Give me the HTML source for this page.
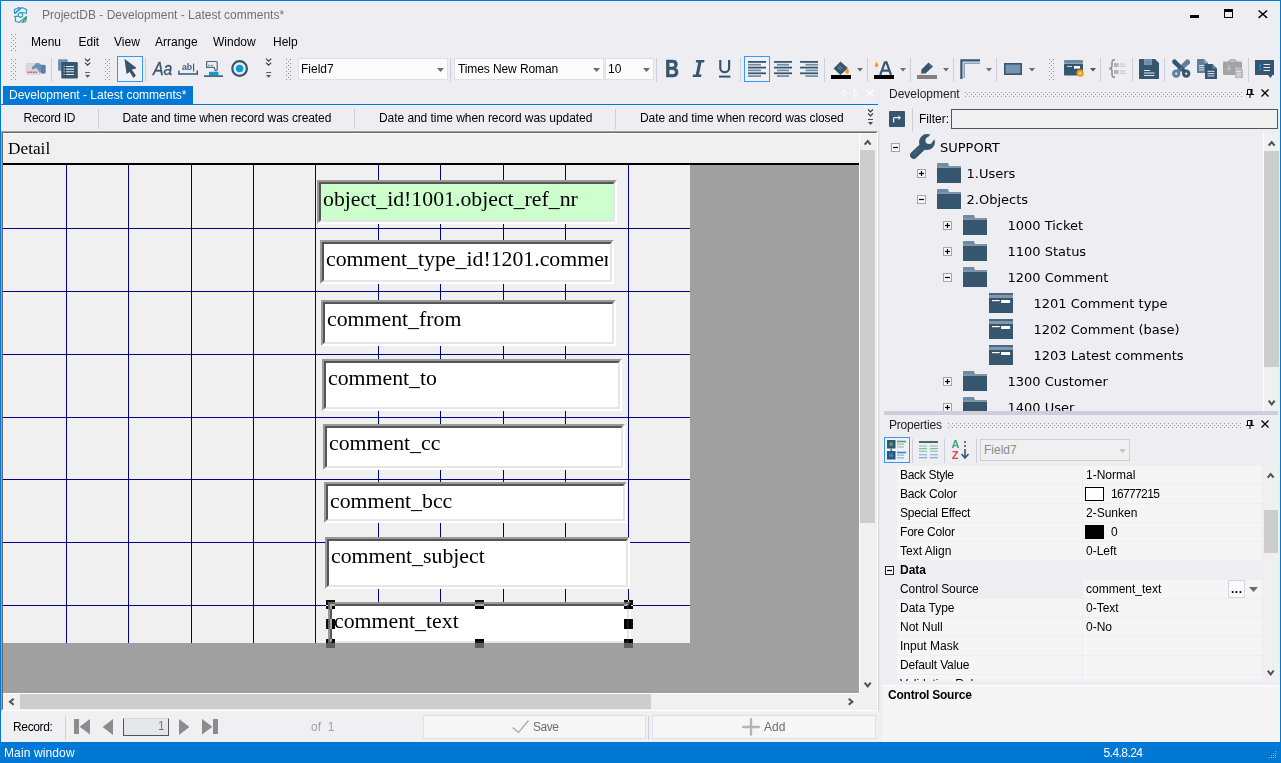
<!DOCTYPE html>
<html><head><meta charset="utf-8"><title>ProjectDB</title>
<style>
*{box-sizing:border-box;margin:0;padding:0}
html,body{width:1281px;height:763px;overflow:hidden}
body{background:#eeeef2;font-family:"Liberation Sans",sans-serif;font-size:12px;color:#1e1e1e;position:relative}
.a{position:absolute}
.t{position:absolute;white-space:nowrap;line-height:16px;height:16px}
.grip{position:absolute;width:6px;background-image:radial-gradient(circle at 1px 1px,#999aa3 0.7px,transparent 1px),radial-gradient(circle at 3px 3px,#999aa3 0.7px,transparent 1px);background-size:4px 4px}
.hgrip{position:absolute;height:5px;background-image:radial-gradient(circle at 1px 1px,#a3a4ae 0.7px,transparent 1px),radial-gradient(circle at 3px 3px,#a3a4ae 0.7px,transparent 1px);background-size:4px 4px}
.sep{position:absolute;width:1px;background:#cccedb}
svg{position:absolute;overflow:visible}
.fld{position:absolute;background:#fff;border-top:2px solid #9a9a9a;border-left:2px solid #9a9a9a;border-right:2px solid #fff;border-bottom:2px solid #fff}
.fld i{position:absolute;left:0;top:0;right:0;bottom:0;border-top:2px solid #555;border-left:2px solid #555;border-right:2px solid #e6e6e6;border-bottom:2px solid #e6e6e6}
.fld b{position:absolute;font-weight:normal;font-family:"Liberation Serif",serif;font-size:21.8px;line-height:24px;white-space:nowrap;color:#000;left:4px;top:5px;right:4px;overflow:hidden}
.hd{position:absolute;width:7px;height:6px;background:#000}
.tree{font-family:"DejaVu Sans","Liberation Sans",sans-serif;font-size:13px;color:#000}
.pr{position:absolute;left:896px;width:364px;height:19px;background:#f5f5f5}
.pr .t{top:1px}
</style></head><body>
<svg width="0" height="0" style="left:0;top:0"><defs><pattern id="gp" width="4" height="4" patternUnits="userSpaceOnUse"><rect x="0" y="0" width="1" height="1" fill="#8e8e92"/><rect x="2" y="2" width="1" height="1" fill="#8e8e92"/></pattern><pattern id="gp2" width="4" height="4" patternUnits="userSpaceOnUse"><rect x="0" y="0" width="1" height="1" fill="#9a9a9e"/><rect x="2" y="2" width="1" height="1" fill="#9a9a9e"/></pattern></defs></svg>
<div class="a" style="left:0px;top:0px;width:1281px;height:1px;background:#0078d7"></div>
<div class="a" style="left:0px;top:0px;width:1px;height:763px;background:#0078d7"></div>
<div class="a" style="left:1280px;top:0px;width:1px;height:763px;background:#0078d7"></div>
<svg style="left:14px;top:7px" width="13" height="16" viewBox="0 0 13 16"><g fill="none" stroke-width="1.15" stroke-linejoin="round" stroke-linecap="round">
<path d="M0.5 2.6 L5 0.5 L6.2 1 L0.9 6.3 L0.5 6.1 Z" stroke="#2196d8"/>
<path d="M1.4 6.4 L8 0.5 L12.5 2.6 L12.5 6.2 L6.8 5.3" stroke="#2a9cc4"/>
<path d="M4.4 6.7 L6.4 5.4 L8.6 7 L8.6 9.3 L6.6 10.5 L4.4 9.1 Z" stroke="#2aa0b5"/>
<path d="M0.5 9.6 L4.4 9.1 M1.3 9.9 L1.5 14.3 L5.2 15.5 L12.4 9.5" stroke="#2ba2a6"/>
<path d="M12.5 9.8 L11.7 14.5 L8.2 15.5 L11.5 11.4" stroke="#35a06a"/>
</g></svg>
<div class="t " style="left:42px;top:7px;color:#717171">ProjectDB - Development - Latest comments*</div>
<div class="a" style="left:1190px;top:15px;width:9px;height:3px;background:#000"></div>
<div class="a" style="left:1224px;top:9px;width:9px;height:9px;border:1px solid #000;border-top-width:3px"></div>
<svg style="left:1258.3px;top:9.8px" width="9.7" height="8.4" viewBox="0 0 9.7 8.4"><path d="M0.6 0.5 L9.1 7.9 M9.1 0.5 L0.6 7.9" stroke="#000" stroke-width="1.4" fill="none"/></svg>
<svg style="left:11px;top:34px" width="5" height="17"><rect width="5" height="17" fill="url(#gp)"/></svg>
<div class="t " style="left:31px;top:34px;color:#000">Menu</div>
<div class="t " style="left:78.5px;top:34px;color:#000">Edit</div>
<div class="t " style="left:114px;top:34px;color:#000">View</div>
<div class="t " style="left:155px;top:34px;color:#000">Arrange</div>
<div class="t " style="left:213px;top:34px;color:#000">Window</div>
<div class="t " style="left:273px;top:34px;color:#000">Help</div>
<svg style="left:11px;top:59px" width="5" height="21"><rect width="5" height="21" fill="url(#gp)"/></svg>
<svg style="left:26px;top:62px" width="20" height="14" viewBox="0 0 20 14"><rect x="0.3" y="1.5" width="14.6" height="10.8" rx="0.8" fill="#d6dade" stroke="#c6cad1" stroke-width="0.6"/><path d="M7.4 5.9 L11.4 2.4" stroke="#6f93b6" stroke-width="3" stroke-linecap="round"/><path d="M9.6 1.6 L12.4 1 L16 3.2 V10.6 H13.2 C12.4 8.2 11.2 6.6 9 5.6 Z" fill="#6f93b6"/><rect x="15" y="2.7" width="4.7" height="9" rx="1.6" fill="#5b80a3"/><path d="M1.8 10.2 H11" stroke="#e8474c" stroke-width="1.5" stroke-dasharray="1.6 0.9"/></svg>
<div class="sep" style="left:51px;top:58px;height:24px"></div>
<svg style="left:58px;top:59px" width="20" height="20" viewBox="0 0 20 20"><rect x="0" y="0.2" width="9.6" height="11.6" rx="1" fill="#6d90b3"/><rect x="3.3" y="3" width="16.5" height="16.6" rx="1.2" fill="#36566f"/><path d="M8 7.5 H16 M8 10.1 H16 M8 12.7 H16 M8 15.5 H16" stroke="#e3e9ef" stroke-width="1.1"/><path d="M5.6 7.5 H6.8 M5.6 10.1 H6.8 M5.6 12.7 H6.8 M5.6 15.5 H6.8" stroke="#c5d2de" stroke-width="1.1"/></svg>
<svg style="left:84px;top:58px" width="7" height="21" viewBox="0 0 7 21"><path d="M1 0.6 L3.6 3.2 L6.2 0.6 M1 4.6 L3.6 7.2 L6.2 4.6" stroke="#3b3b3b" stroke-width="1.05" fill="none"/><path d="M1 14.6 H6.2" stroke="#5a5a5a" stroke-width="1"/><path d="M1 17 H6.2 L3.6 19.8 Z" fill="#5a5a5a"/></svg>
<svg style="left:105px;top:59px" width="5" height="21"><rect width="5" height="21" fill="url(#gp)"/></svg>
<div class="a" style="left:117px;top:56px;width:26px;height:26px;border:1px solid #3399ff;background:#f1f1f5"></div>
<svg style="left:123px;top:59px" width="14" height="20" viewBox="0 0 14 20"><path d="M1.4 -0.2 L13 8.4 L12.6 9.8 L8.8 10.4 L12.9 16.5 L10.4 19 L6.8 13 L3.6 15 Z" fill="#36566f"/></svg>
<div class="sep" style="left:145px;top:58px;height:24px"></div>
<div class="t " style="left:152.6px;top:57.8px;font-style:italic;font-size:17.6px;line-height:22px;height:22px;color:#36566f;transform:scaleX(0.9);transform-origin:0 0;-webkit-text-stroke:0.3px #36566f">Aa</div>
<svg style="left:178px;top:60px" width="20" height="18" viewBox="0 0 20 18"><text x="4" y="10.3" font-family="Liberation Sans,sans-serif" font-size="9" font-weight="700" fill="#3f5f78" textLength="10.2" lengthAdjust="spacingAndGlyphs">ab</text><path d="M15.6 3.4 V11.5" stroke="#36566f" stroke-width="1.1"/><path d="M0.9 10.6 V14 H19.3 V10.6" stroke="#36566f" stroke-width="1.4" fill="none"/></svg>
<svg style="left:204px;top:60px" width="20" height="18" viewBox="0 0 20 18"><path d="M2.6 1.5 H12.2 Q13.2 1.5 13.2 2.5 V9.8 Q12.2 11.4 11 10 L10 7.4 H2.6 Z" fill="none" stroke="#4a6983" stroke-width="1.2" stroke-linejoin="round"/><path d="M4 5.4 H9.6" stroke="#6d8ba5" stroke-width="1.2" stroke-dasharray="1 0.5"/><rect x="5" y="11.8" width="9.5" height="3.6" fill="#0e9ad7"/><path d="M0 16.1 H19" stroke="#36566f" stroke-width="1.6"/></svg>
<svg style="left:231px;top:60px" width="17" height="17" viewBox="0 0 17 17"><circle cx="8.6" cy="8.5" r="7.3" fill="none" stroke="#36566f" stroke-width="2.2"/><circle cx="8.6" cy="8.5" r="3.8" fill="#0e9ad7"/></svg>
<svg style="left:265px;top:58px" width="7" height="21" viewBox="0 0 7 21"><path d="M1 0.6 L3.6 3.2 L6.2 0.6 M1 4.6 L3.6 7.2 L6.2 4.6" stroke="#3b3b3b" stroke-width="1.05" fill="none"/><path d="M1 14.6 H6.2" stroke="#5a5a5a" stroke-width="1"/><path d="M1 17 H6.2 L3.6 19.8 Z" fill="#5a5a5a"/></svg>
<svg style="left:286px;top:59px" width="5" height="21"><rect width="5" height="21" fill="url(#gp)"/></svg>
<div class="a" style="left:298px;top:58px;width:150px;height:22px;border:1px solid #dddfe9;background:#fcfcfc"></div>
<div class="t " style="left:301px;top:61px;color:#000">Field7</div>
<svg style="left:437px;top:68px" width="7" height="4" viewBox="0 0 7 4"><path d="M0 0 H7 L3.5 4 Z" fill="#6d6d6d"/></svg>
<div class="sep" style="left:450px;top:58px;height:24px"></div>
<div class="a" style="left:454px;top:58px;width:150px;height:22px;border:1px solid #dddfe9;background:#fcfcfc"></div>
<div class="t " style="left:458px;top:61px;color:#000;letter-spacing:-0.1px">Times New Roman</div>
<svg style="left:593px;top:68px" width="7" height="4" viewBox="0 0 7 4"><path d="M0 0 H7 L3.5 4 Z" fill="#6d6d6d"/></svg>
<div class="a" style="left:605px;top:58px;width:49px;height:22px;border:1px solid #dddfe9;background:#fcfcfc"></div>
<div class="t " style="left:608px;top:61px;color:#000">10</div>
<svg style="left:643px;top:68px" width="7" height="4" viewBox="0 0 7 4"><path d="M0 0 H7 L3.5 4 Z" fill="#6d6d6d"/></svg>
<div class="sep" style="left:656px;top:58px;height:24px"></div>
<div class="t " style="left:665px;top:56px;font-weight:700;font-size:23px;line-height:26px;height:26px;color:#36566f;transform:scaleX(0.84);transform-origin:0 0;-webkit-text-stroke:0.7px #36566f">B</div>
<svg style="left:692px;top:60px" width="13" height="17" viewBox="0 0 13 17"><path d="M4.2 0 H12.6 L12.1 2.6 H9.4 L7 14.4 H9.6 L9.1 17 H0.6 L1.1 14.4 H3.8 L6.2 2.6 H3.7 Z" fill="#36566f"/></svg>
<svg style="left:719px;top:60px" width="12" height="18" viewBox="0 0 12 18"><path d="M1.3 0 V8.2 C1.3 13.4 10.1 13.4 10.1 8.2 V0" stroke="#36566f" stroke-width="2.2" fill="none"/><path d="M0 16.6 H11.4" stroke="#36566f" stroke-width="2"/></svg>
<div class="sep" style="left:740px;top:58px;height:24px"></div>
<div class="a" style="left:744px;top:56px;width:26px;height:26px;border:1px solid #3399ff;background:#f1f1f5"></div>
<svg style="left:748px;top:60px" width="18" height="18" viewBox="0 0 18 18"><rect x="0" y="1.00" width="18" height="1.8" fill="#36566f"/><rect x="0" y="3.85" width="13" height="1.7" fill="#6d8ba5"/><rect x="0" y="6.70" width="18" height="1.8" fill="#36566f"/><rect x="0" y="9.55" width="13" height="1.7" fill="#6d8ba5"/><rect x="0" y="12.40" width="18" height="1.8" fill="#36566f"/><rect x="0" y="15.25" width="13" height="1.7" fill="#6d8ba5"/></svg>
<svg style="left:774px;top:60px" width="18" height="18" viewBox="0 0 18 18"><rect x="0" y="1.00" width="18" height="1.8" fill="#36566f"/><rect x="3" y="3.85" width="12" height="1.7" fill="#6d8ba5"/><rect x="0" y="6.70" width="18" height="1.8" fill="#36566f"/><rect x="3" y="9.55" width="12" height="1.7" fill="#6d8ba5"/><rect x="0" y="12.40" width="18" height="1.8" fill="#36566f"/><rect x="3" y="15.25" width="12" height="1.7" fill="#6d8ba5"/></svg>
<svg style="left:800px;top:60px" width="18" height="18" viewBox="0 0 18 18"><rect x="0" y="1.00" width="18" height="1.8" fill="#36566f"/><rect x="5.5" y="3.85" width="12.5" height="1.7" fill="#6d8ba5"/><rect x="0" y="6.70" width="18" height="1.8" fill="#36566f"/><rect x="5.5" y="9.55" width="12.5" height="1.7" fill="#6d8ba5"/><rect x="0" y="12.40" width="18" height="1.8" fill="#36566f"/><rect x="5.5" y="15.25" width="12.5" height="1.7" fill="#6d8ba5"/></svg>
<div class="sep" style="left:824px;top:58px;height:24px"></div>
<svg style="left:831px;top:61px" width="20" height="18" viewBox="0 0 20 18"><path d="M9.5 0.6 L17 7.2 L9.4 14 L2.6 7.6 Z" fill="#36566f"/><path d="M8.2 4.6 l3.4 3 M6.8 6 l3.4 3" stroke="#8aa4bd" stroke-width="0.8"/><path d="M16.2 6.6 C14.4 9.4 13.8 10.8 14.6 12 C15.5 13.2 17.4 13 17.9 11.6 C18.3 10.3 17.6 8.8 16.2 6.6 Z" fill="#f39a1e"/><rect x="0" y="14" width="20" height="4" fill="#000"/></svg>
<svg style="left:857px;top:68px" width="6" height="3.4" viewBox="0 0 6 3.4"><path d="M0 0 H6 L3.0 3.4 Z" fill="#6d6d6d"/></svg>
<div class="sep" style="left:867px;top:58px;height:24px"></div>
<svg style="left:874px;top:61px" width="20" height="18" viewBox="0 0 20 18"><path d="M2.6 0.8 C1 3.2 0.6 4.4 1.3 5.5 C2.1 6.5 3.8 6.3 4.2 5 C4.5 3.9 3.9 2.8 2.6 0.8 Z" fill="#f39a1e"/><path d="M6.2 13.8 L10.9 1.4 H12.5 L17 13.8 M8 9.6 H15.2" stroke="#36566f" stroke-width="2.2" fill="none"/><rect x="0" y="14" width="20" height="4" fill="#000"/></svg>
<svg style="left:900px;top:68px" width="6" height="3.4" viewBox="0 0 6 3.4"><path d="M0 0 H6 L3.0 3.4 Z" fill="#6d6d6d"/></svg>
<div class="sep" style="left:910px;top:58px;height:24px"></div>
<svg style="left:917px;top:62px" width="20" height="17" viewBox="0 0 20 17"><path d="M11.5 0.5 L16 4.5 L8.5 11.5 L4 11.5 L4.5 7.5 Z" fill="#36566f"/><path d="M3.2 12.4 L4.5 10.6 L5.6 11.8 Z" fill="#f39a1e"/><path d="M12 2.6 l2 1.8" stroke="#7f9ab5" stroke-width="0.7"/><rect x="0" y="13" width="20" height="4" fill="#808080"/></svg>
<svg style="left:943px;top:68px" width="6" height="3.4" viewBox="0 0 6 3.4"><path d="M0 0 H6 L3.0 3.4 Z" fill="#6d6d6d"/></svg>
<div class="sep" style="left:953px;top:58px;height:24px"></div>
<svg style="left:960px;top:59px" width="20" height="20" viewBox="0 0 20 20"><path d="M1.4 20 V1.4 H20" stroke="#36566f" stroke-width="2.2" fill="none"/><path d="M4.2 19 V4.2 H20" stroke="#8ea4bb" stroke-width="1.6" fill="none"/></svg>
<svg style="left:986px;top:68px" width="6" height="3.4" viewBox="0 0 6 3.4"><path d="M0 0 H6 L3.0 3.4 Z" fill="#6d6d6d"/></svg>
<div class="sep" style="left:996px;top:58px;height:24px"></div>
<svg style="left:1004px;top:63px" width="18" height="12" viewBox="0 0 18 12"><rect x="0.8" y="0.8" width="16.4" height="10.4" fill="#7795b1" stroke="#36566f" stroke-width="1.6"/></svg>
<svg style="left:1029px;top:68px" width="6" height="3.4" viewBox="0 0 6 3.4"><path d="M0 0 H6 L3.0 3.4 Z" fill="#6d6d6d"/></svg>
<svg style="left:1049px;top:59px" width="5" height="21"><rect width="5" height="21" fill="url(#gp)"/></svg>
<svg style="left:1064px;top:60px" width="20" height="17" viewBox="0 0 20 17"><rect x="0" y="0" width="19" height="3" rx="0.6" fill="#6d8ba5"/><rect x="0" y="3.4" width="19" height="12.2" rx="0.8" fill="#36566f"/><path d="M3 6.5 H8" stroke="#c8d4df" stroke-width="1"/><rect x="10" y="6" width="6" height="2.6" fill="#fff"/><circle cx="16.2" cy="13.2" r="3.6" fill="#f39a1e"/><path d="M14.6 14.4 l3 -2.4 M15 12.4 l2.6 1.6" stroke="#fbe3bd" stroke-width="0.9"/></svg>
<svg style="left:1090px;top:68px" width="6" height="3.4" viewBox="0 0 6 3.4"><path d="M0 0 H6 L3.0 3.4 Z" fill="#4d4d4d"/></svg>
<div class="sep" style="left:1100px;top:58px;height:24px"></div>
<svg style="left:1108px;top:59px" width="18" height="19" viewBox="0 0 18 19"><path d="M7 0.8 C4.2 0.8 4 1.6 4 4 V7 C4 8.8 3 9.4 1.2 9.5 C3 9.6 4 10.2 4 12 V15 C4 17.4 4.2 18.2 7 18.2" stroke="#8b8b8b" stroke-width="1.5" fill="none"/><rect x="6" y="4" width="4.5" height="4" fill="#b4b4b4"/><rect x="6" y="11" width="4.5" height="4" fill="#b4b4b4"/><path d="M12 5 H17 M12 7.3 H18 M12 12 H17 M12 14.3 H18" stroke="#c4c4c4" stroke-width="1"/></svg>
<div class="sep" style="left:1132px;top:58px;height:24px"></div>
<svg style="left:1139px;top:59px" width="20" height="20" viewBox="0 0 20 20"><path d="M1 0 H16 L20 4 V19 C20 19.6 19.6 20 19 20 H1 C0.4 20 0 19.6 0 19 V1 C0 0.4 0.4 0 1 0 Z" fill="#36566f"/><rect x="5" y="0" width="8" height="6" fill="#7795b1"/><path d="M7.5 3.2 H9.5" stroke="#36566f" stroke-width="0.8"/><path d="M5 11.5 H11 M5 14 H15.5 M5 16.5 H15.5" stroke="#e3e9ef" stroke-width="1.2"/></svg>
<div class="sep" style="left:1164px;top:58px;height:24px"></div>
<svg style="left:1172px;top:59px" width="19" height="19" viewBox="0 0 19 19"><path d="M14.6 0.2 C17.2 0.2 18.6 2.2 17.8 4.6 L7.6 13.6 L4.6 10.4 Z" fill="#5f7f9c"/><circle cx="4.2" cy="14.6" r="2.7" fill="none" stroke="#5f7f9c" stroke-width="3"/><path d="M2 0.2 C0 0.8 -0.4 3 0.8 4.6 L11.2 14 L14.4 11.4 L3.6 0.4 Z" fill="#36566f"/><circle cx="14.2" cy="14.6" r="2.7" fill="none" stroke="#36566f" stroke-width="3"/><circle cx="9.1" cy="9.6" r="1" fill="#5f7f9c"/></svg>
<svg style="left:1197px;top:59px" width="20" height="20" viewBox="0 0 20 20"><path d="M0 0 H7 L11 4 V14 H0 Z" fill="#5f7f9c"/><path d="M7 0 V4 H11 Z" fill="#8da7c0"/><path d="M2 6.5 H7 M2 8.7 H7 M2 10.9 H7" stroke="#dfe6ee" stroke-width="1"/><path d="M8 5 H15.5 L20 9.5 V20 H8 Z" fill="#36566f"/><path d="M15.5 5 V9.5 H20 Z" fill="#6d8ba5"/><path d="M10.5 12.3 H17.5 M10.5 14.6 H17.5 M10.5 16.9 H17.5" stroke="#dfe6ee" stroke-width="1"/></svg>
<svg style="left:1223px;top:59px" width="20" height="20" viewBox="0 0 20 20"><path d="M6 3 C6 0 13 0 13 3" stroke="#a8a8a8" stroke-width="1.4" fill="none"/><rect x="0" y="2.5" width="19" height="13.5" rx="1" fill="#a3a3a3"/><path d="M6 6 V11 M4 9 L6 11.5 L8 9" stroke="#c9c9c9" stroke-width="1" fill="none"/><path d="M12 8 H17 L20 11 V19 H12 Z" fill="#b9b9b9"/><path d="M13.5 12.5 H18 M13.5 14.7 H18 M13.5 16.9 H18" stroke="#e6e6e6" stroke-width="1"/></svg>
<div class="sep" style="left:1248px;top:58px;height:24px"></div>
<svg style="left:1255px;top:60px" width="20" height="19" viewBox="0 0 20 19"><path d="M0 0 H19 V15 H17.5 L15.5 18 L13 15 H0 Z" fill="#36566f"/><path d="M8.5 4.5 H15 M8.5 7.5 H15 M8.5 10.5 H15" stroke="#e3e9ef" stroke-width="1.2"/><path d="M5.2 4.5 V10.5 M4 6 L5.2 4.5" stroke="#0e9ad7" stroke-width="1" fill="none"/></svg>
<div class="a" style="left:3px;top:86px;width:190px;height:19px;background:#0078d4"></div>
<div class="a" style="left:1px;top:104px;width:877px;height:1px;background:#0078d4"></div>
<div class="t " style="left:9px;top:87px;color:#fff">Development - Latest comments*</div>
<svg style="left:840px;top:89px" width="35" height="9" viewBox="0 0 35 9"><path d="M5 0.5 V8 L0.8 4.2 Z M14.5 0.5 V8 L18.7 4.2 Z" fill="none" stroke="#fff" stroke-width="1"/><path d="M26.5 0.7 L33.5 7.7 M33.5 0.7 L26.5 7.7" stroke="#fff" stroke-width="1.3"/></svg>
<div class="t " style="left:23.5px;top:110px;color:#000;letter-spacing:-0.27px">Record ID</div>
<div class="t " style="left:122.5px;top:110px;color:#000;letter-spacing:-0.09px">Date and time when record was created</div>
<div class="t " style="left:379px;top:110px;color:#000;letter-spacing:-0.06px">Date and time when record was updated</div>
<div class="t " style="left:640px;top:110px;color:#000;letter-spacing:-0.085px">Date and time when record was closed</div>
<div class="sep" style="left:98px;top:109px;height:20px"></div>
<div class="sep" style="left:354px;top:109px;height:20px"></div>
<div class="sep" style="left:615px;top:109px;height:20px"></div>
<svg style="left:867px;top:109px" width="7" height="17" viewBox="0 0 7 17"><path d="M1.1 0.5 L3.5 3 L5.9 0.5 M1.1 4.5 L3.5 7 L5.9 4.5" stroke="#3b3b3b" stroke-width="1.2" fill="none"/><path d="M1 10.5 H6" stroke="#4a4a4a" stroke-width="1"/><path d="M1 13 H6 L3.5 16 Z" fill="#4a4a4a"/></svg>
<div class="a" style="left:878px;top:131px;width:1px;height:611px;background:#d7d9e5"></div>
<div class="a" style="left:879px;top:131px;width:1px;height:611px;background:#e5e6ee"></div>
<div class="a" style="left:878px;top:86px;width:2px;height:45px;background:#eaeaf0"></div>
<div class="a" style="left:1px;top:131px;width:877px;height:580px;border-top:1px solid #a0a0a0;border-left:1px solid #a0a0a0;border-right:1px solid #fff;border-bottom:1px solid #fff;background:#a0a0a0"></div>
<div class="a" style="left:2px;top:132px;width:875px;height:578px;border-top:1px solid #696969;border-left:1px solid #696969;border-right:1px solid #e3e3e3;border-bottom:1px solid #e3e3e3"></div>
<div class="a" style="left:3px;top:133px;width:856px;height:560px;overflow:hidden;background:#a0a0a0">
<div class="a" style="left:0px;top:0px;width:856px;height:30px;background:#f0f0f0"></div>
<div class="t" style="left:5px;top:6px;font-family:'Liberation Serif',serif;font-size:17.3px;line-height:20px;height:20px;color:#000">Detail</div>
<div class="a" style="left:0px;top:30px;width:856px;height:2px;background:#000"></div>
<div class="a" style="left:0px;top:32px;width:687px;height:478px;overflow:hidden;background:#f0f0f0">
<div class="a" style="left:63px;top:0;width:1px;height:478px;background:#000080"></div>
<div class="a" style="left:125px;top:0;width:1px;height:478px;background:#000080"></div>
<div class="a" style="left:188px;top:0;width:1px;height:478px;background:#000080"></div>
<div class="a" style="left:250px;top:0;width:1px;height:478px;background:#000080"></div>
<div class="a" style="left:312px;top:0;width:1px;height:478px;background:#000080"></div>
<div class="a" style="left:375px;top:0;width:1px;height:478px;background:#000080"></div>
<div class="a" style="left:437px;top:0;width:1px;height:478px;background:#000080"></div>
<div class="a" style="left:500px;top:0;width:1px;height:478px;background:#000080"></div>
<div class="a" style="left:562px;top:0;width:1px;height:478px;background:#000080"></div>
<div class="a" style="left:625px;top:0;width:1px;height:478px;background:#000080"></div>
<div class="a" style="left:0;top:63px;width:687px;height:1px;background:#000080"></div>
<div class="a" style="left:0;top:126px;width:687px;height:1px;background:#000080"></div>
<div class="a" style="left:0;top:189px;width:687px;height:1px;background:#000080"></div>
<div class="a" style="left:0;top:252px;width:687px;height:1px;background:#000080"></div>
<div class="a" style="left:0;top:314px;width:687px;height:1px;background:#000080"></div>
<div class="a" style="left:0;top:377px;width:687px;height:1px;background:#000080"></div>
<div class="a" style="left:0;top:440px;width:687px;height:1px;background:#000080"></div>
<div class="fld" style="left:314px;top:15px;width:300px;height:44px;background:#ccffcc"><i></i><b>object_id!1001.object_ref_nr</b></div>
<div class="fld" style="left:317px;top:75px;width:294px;height:44px;background:#fff"><i></i><b>comment_type_id!1201.comment_type_name</b></div>
<div class="fld" style="left:318px;top:135px;width:295px;height:46px;background:#fff"><i></i><b>comment_from</b></div>
<div class="fld" style="left:319px;top:194px;width:300px;height:52px;background:#fff"><i></i><b>comment_to</b></div>
<div class="fld" style="left:320px;top:259px;width:302px;height:46px;background:#fff"><i></i><b>comment_cc</b></div>
<div class="fld" style="left:321px;top:317px;width:303px;height:41px;background:#fff"><i></i><b>comment_bcc</b></div>
<div class="fld" style="left:322px;top:372px;width:305px;height:52px;background:#fff"><i></i><b>comment_subject</b></div>
<div class="fld" style="left:325px;top:437px;width:303px;height:43px;background:#fff"><i></i><b>comment_text</b></div>
</div>
</div>
<div class="a" style="left:326px;top:600px;width:9px;height:9px;background:#fff;mix-blend-mode:difference"></div>
<div class="a" style="left:326px;top:619px;width:9px;height:10px;background:#fff;mix-blend-mode:difference"></div>
<div class="a" style="left:326px;top:639px;width:9px;height:9px;background:#fff;mix-blend-mode:difference"></div>
<div class="a" style="left:475px;top:600px;width:9px;height:9px;background:#fff;mix-blend-mode:difference"></div>
<div class="a" style="left:475px;top:639px;width:9px;height:9px;background:#fff;mix-blend-mode:difference"></div>
<div class="a" style="left:624px;top:600px;width:9px;height:9px;background:#fff;mix-blend-mode:difference"></div>
<div class="a" style="left:624px;top:619px;width:9px;height:10px;background:#fff;mix-blend-mode:difference"></div>
<div class="a" style="left:624px;top:639px;width:9px;height:9px;background:#fff;mix-blend-mode:difference"></div>
<div class="a" style="left:859px;top:133px;width:18px;height:560px;background:#f0f0f0"></div>
<svg style="left:864px;top:138.7px" width="7.4" height="6.4" viewBox="0 0 7.4 6.4"><path d="M0.7 5.7 L3.7 2 L6.7 5.7" stroke="#505050" stroke-width="2" fill="none"/></svg>
<svg style="left:864px;top:682px" width="7.4" height="6.4" viewBox="0 0 7.4 6.4"><path d="M0.7 0.7 L3.7 4.4 L6.7 0.7" stroke="#505050" stroke-width="2" fill="none"/></svg>
<div class="a" style="left:860px;top:150px;width:15px;height:373px;background:#cdcdcd"></div>
<div class="a" style="left:859px;top:133px;width:1px;height:560px;background:#fff"></div>
<div class="a" style="left:3px;top:133px;width:874px;height:1px;background:#fff"></div>
<div class="a" style="left:3px;top:693px;width:874px;height:17px;background:#f0f0f0"></div>
<div class="a" style="left:3px;top:693px;width:856px;height:1px;background:#fff"></div>
<div class="a" style="left:20px;top:694px;width:631px;height:15px;background:#cdcdcd"></div>
<svg style="left:8px;top:698px" width="6.4" height="7.4" viewBox="0 0 6.4 7.4"><path d="M5.7 0.7 L2 3.7 L5.7 6.7" stroke="#505050" stroke-width="2" fill="none"/></svg>
<svg style="left:848px;top:698px" width="6.4" height="7.4" viewBox="0 0 6.4 7.4"><path d="M0.7 0.7 L4.4 3.7 L0.7 6.7" stroke="#505050" stroke-width="2" fill="none"/></svg>
<div class="t " style="left:889px;top:86px;color:#1e1e1e">Development</div>
<svg style="left:965px;top:92px" width="277" height="5"><rect width="277" height="5" fill="url(#gp2)"/></svg>
<svg style="left:1246px;top:89px" width="8" height="9" viewBox="0 0 8 9"><path d="M1.5 0.5 H6.5 M1.5 0.5 V5 M0 5.5 H8 M4 5.5 V9" stroke="#000" stroke-width="1" fill="none"/><path d="M5.5 0.5 V5" stroke="#000" stroke-width="2"/></svg>
<svg style="left:1261px;top:89px" width="8" height="8" viewBox="0 0 8 8"><path d="M0.5 0.5 L7.5 7.5 M7.5 0.5 L0.5 7.5" stroke="#000" stroke-width="1.25" fill="none"/></svg>
<div class="a" style="left:889px;top:111px;width:16px;height:16px;background:#36566f;border-radius:1px"></div>
<svg style="left:892px;top:114px" width="10" height="10" viewBox="0 0 10 10"><path d="M1.6 8 V4.7 Q1.6 3.7 2.6 3.7 H7" stroke="#e8eef4" stroke-width="1.3" fill="none" stroke-linecap="round"/><path d="M6.4 1.2 L9.1 3.7 L6.4 6.1 Z" fill="#e8eef4"/></svg>
<div class="sep" style="left:912px;top:108px;height:24px"></div>
<div class="t " style="left:919px;top:111px;color:#000">Filter:</div>
<div class="a" style="left:951px;top:109px;width:327px;height:20px;border:1px solid #555;background:#f0f0f0"></div>
<div class="a" style="left:1263px;top:133px;width:1px;height:278px;background:#fff"></div>
<div class="a" style="left:1264px;top:133px;width:15px;height:278px;background:#f0f0f0"></div>
<svg style="left:1268px;top:140px" width="7.4" height="6.4" viewBox="0 0 7.4 6.4"><path d="M0.7 5.7 L3.7 2 L6.7 5.7" stroke="#505050" stroke-width="2" fill="none"/></svg>
<svg style="left:1268px;top:400px" width="7.4" height="6.4" viewBox="0 0 7.4 6.4"><path d="M0.7 0.7 L3.7 4.4 L6.7 0.7" stroke="#505050" stroke-width="2" fill="none"/></svg>
<div class="a" style="left:1264px;top:151px;width:15px;height:216px;background:#cdcdcd"></div>
<div class="a" style="left:884px;top:133px;width:379px;height:278px;overflow:hidden">
<svg style="left:7px;top:10px" width="9" height="9" viewBox="0 0 9 9"><rect x="0.5" y="0.5" width="8" height="8" fill="#f8f8f8" stroke="#a5a5a5" stroke-width="1"/><path d="M2 4.5 H7" stroke="#000" stroke-width="1.2"/></svg>
<svg style="left:26px;top:1px" width="25" height="25" viewBox="0 0 25 25"><path d="M3.8 21.2 L13 12.4" stroke="#36566f" stroke-width="7.4" stroke-linecap="round"/><circle cx="17" cy="8.1" r="8" fill="#36566f"/><circle cx="19" cy="6.5" r="3.5" fill="#eeeef2"/><path d="M19 6.5 L27 -1.5" stroke="#eeeef2" stroke-width="6.2"/><path d="M3.4 20.4 L9.6 14.4" stroke="#6d8ba5" stroke-width="0.8" stroke-dasharray="1.5 0.7"/></svg>
<div class="t tree" style="left:56px;top:6px;line-height:17px;height:17px">SUPPORT</div>
<svg style="left:33px;top:36px" width="9" height="9" viewBox="0 0 9 9"><rect x="0.5" y="0.5" width="8" height="8" fill="#f8f8f8" stroke="#a5a5a5" stroke-width="1"/><path d="M2 4.5 H7" stroke="#000" stroke-width="1.2"/><path d="M4.5 2 V7" stroke="#000" stroke-width="1.2"/></svg>
<svg style="left:53px;top:30px" width="24" height="20" viewBox="0 0 24 20"><path d="M1 0 H11 L12 3 H0 V1 C0 0.4 0.4 0 1 0 Z" fill="#6d8ba5"/><rect x="0" y="3" width="24" height="2.2" fill="#8294a6"/><rect x="0" y="5" width="24" height="15" fill="#36566f"/></svg>
<div class="t tree" style="left:82.5px;top:32px;line-height:17px;height:17px">1.Users</div>
<svg style="left:33px;top:62px" width="9" height="9" viewBox="0 0 9 9"><rect x="0.5" y="0.5" width="8" height="8" fill="#f8f8f8" stroke="#a5a5a5" stroke-width="1"/><path d="M2 4.5 H7" stroke="#000" stroke-width="1.2"/></svg>
<svg style="left:53px;top:56px" width="24" height="20" viewBox="0 0 24 20"><path d="M1 0 H11 L12 3 H0 V1 C0 0.4 0.4 0 1 0 Z" fill="#6d8ba5"/><rect x="0" y="3" width="24" height="2.2" fill="#8294a6"/><rect x="0" y="5" width="24" height="15" fill="#36566f"/></svg>
<div class="t tree" style="left:82.5px;top:58px;line-height:17px;height:17px">2.Objects</div>
<svg style="left:59px;top:88px" width="9" height="9" viewBox="0 0 9 9"><rect x="0.5" y="0.5" width="8" height="8" fill="#f8f8f8" stroke="#a5a5a5" stroke-width="1"/><path d="M2 4.5 H7" stroke="#000" stroke-width="1.2"/><path d="M4.5 2 V7" stroke="#000" stroke-width="1.2"/></svg>
<svg style="left:79px;top:82px" width="24" height="20" viewBox="0 0 24 20"><path d="M1 0 H11 L12 3 H0 V1 C0 0.4 0.4 0 1 0 Z" fill="#6d8ba5"/><rect x="0" y="3" width="24" height="2.2" fill="#8294a6"/><rect x="0" y="5" width="24" height="15" fill="#36566f"/></svg>
<div class="t tree" style="left:123.5px;top:84px;line-height:17px;height:17px">1000 Ticket</div>
<svg style="left:59px;top:114px" width="9" height="9" viewBox="0 0 9 9"><rect x="0.5" y="0.5" width="8" height="8" fill="#f8f8f8" stroke="#a5a5a5" stroke-width="1"/><path d="M2 4.5 H7" stroke="#000" stroke-width="1.2"/><path d="M4.5 2 V7" stroke="#000" stroke-width="1.2"/></svg>
<svg style="left:79px;top:108px" width="24" height="20" viewBox="0 0 24 20"><path d="M1 0 H11 L12 3 H0 V1 C0 0.4 0.4 0 1 0 Z" fill="#6d8ba5"/><rect x="0" y="3" width="24" height="2.2" fill="#8294a6"/><rect x="0" y="5" width="24" height="15" fill="#36566f"/></svg>
<div class="t tree" style="left:123.5px;top:110px;line-height:17px;height:17px">1100 Status</div>
<svg style="left:59px;top:140px" width="9" height="9" viewBox="0 0 9 9"><rect x="0.5" y="0.5" width="8" height="8" fill="#f8f8f8" stroke="#a5a5a5" stroke-width="1"/><path d="M2 4.5 H7" stroke="#000" stroke-width="1.2"/></svg>
<svg style="left:79px;top:134px" width="24" height="20" viewBox="0 0 24 20"><path d="M1 0 H11 L12 3 H0 V1 C0 0.4 0.4 0 1 0 Z" fill="#6d8ba5"/><rect x="0" y="3" width="24" height="2.2" fill="#8294a6"/><rect x="0" y="5" width="24" height="15" fill="#36566f"/></svg>
<div class="t tree" style="left:123.5px;top:136px;line-height:17px;height:17px">1200 Comment</div>
<svg style="left:105px;top:160px" width="24" height="20" viewBox="0 0 24 20"><rect x="0" y="0" width="24" height="2" fill="#456a86"/><rect x="0" y="2" width="24" height="3" fill="#8496a8"/><rect x="0" y="5" width="24" height="15" fill="#36566f"/><path d="M3 7.6 H10.7" stroke="#fff" stroke-width="1.2"/><rect x="12.1" y="7" width="9" height="3" fill="#fff"/></svg>
<div class="t tree" style="left:149.5px;top:162px;line-height:17px;height:17px">1201 Comment type</div>
<svg style="left:105px;top:186px" width="24" height="20" viewBox="0 0 24 20"><rect x="0" y="0" width="24" height="2" fill="#456a86"/><rect x="0" y="2" width="24" height="3" fill="#8496a8"/><rect x="0" y="5" width="24" height="15" fill="#36566f"/><path d="M3 7.6 H10.7" stroke="#fff" stroke-width="1.2"/><rect x="12.1" y="7" width="9" height="3" fill="#fff"/></svg>
<div class="t tree" style="left:149.5px;top:188px;line-height:17px;height:17px">1202 Comment (base)</div>
<svg style="left:105px;top:212px" width="24" height="20" viewBox="0 0 24 20"><rect x="0" y="0" width="24" height="2" fill="#456a86"/><rect x="0" y="2" width="24" height="3" fill="#8496a8"/><rect x="0" y="5" width="24" height="15" fill="#36566f"/><path d="M3 7.6 H10.7" stroke="#fff" stroke-width="1.2"/><rect x="12.1" y="7" width="9" height="3" fill="#fff"/></svg>
<div class="t tree" style="left:149.5px;top:214px;line-height:17px;height:17px">1203 Latest comments</div>
<svg style="left:59px;top:244px" width="9" height="9" viewBox="0 0 9 9"><rect x="0.5" y="0.5" width="8" height="8" fill="#f8f8f8" stroke="#a5a5a5" stroke-width="1"/><path d="M2 4.5 H7" stroke="#000" stroke-width="1.2"/><path d="M4.5 2 V7" stroke="#000" stroke-width="1.2"/></svg>
<svg style="left:79px;top:238px" width="24" height="20" viewBox="0 0 24 20"><path d="M1 0 H11 L12 3 H0 V1 C0 0.4 0.4 0 1 0 Z" fill="#6d8ba5"/><rect x="0" y="3" width="24" height="2.2" fill="#8294a6"/><rect x="0" y="5" width="24" height="15" fill="#36566f"/></svg>
<div class="t tree" style="left:123.5px;top:240px;line-height:17px;height:17px">1300 Customer</div>
<svg style="left:59px;top:270px" width="9" height="9" viewBox="0 0 9 9"><rect x="0.5" y="0.5" width="8" height="8" fill="#f8f8f8" stroke="#a5a5a5" stroke-width="1"/><path d="M2 4.5 H7" stroke="#000" stroke-width="1.2"/><path d="M4.5 2 V7" stroke="#000" stroke-width="1.2"/></svg>
<svg style="left:79px;top:264px" width="24" height="20" viewBox="0 0 24 20"><path d="M1 0 H11 L12 3 H0 V1 C0 0.4 0.4 0 1 0 Z" fill="#6d8ba5"/><rect x="0" y="3" width="24" height="2.2" fill="#8294a6"/><rect x="0" y="5" width="24" height="15" fill="#36566f"/></svg>
<div class="t tree" style="left:123.5px;top:266px;line-height:17px;height:17px">1400 User</div>
</div>
<div class="a" style="left:884px;top:411px;width:394px;height:4px;background:#cccedb"></div>
<div class="t " style="left:889px;top:417px;color:#1e1e1e;letter-spacing:-0.2px">Properties</div>
<svg style="left:948px;top:423px" width="294" height="5"><rect width="294" height="5" fill="url(#gp2)"/></svg>
<svg style="left:1246px;top:420px" width="8" height="9" viewBox="0 0 8 9"><path d="M1.5 0.5 H6.5 M1.5 0.5 V5 M0 5.5 H8 M4 5.5 V9" stroke="#000" stroke-width="1" fill="none"/><path d="M5.5 0.5 V5" stroke="#000" stroke-width="2"/></svg>
<svg style="left:1261px;top:420px" width="8" height="8" viewBox="0 0 8 8"><path d="M0.5 0.5 L7.5 7.5 M7.5 0.5 L0.5 7.5" stroke="#000" stroke-width="1.25" fill="none"/></svg>
<div class="a" style="left:884px;top:437px;width:26px;height:26px;border:1px solid #3399ff;background:#f1f1f5"></div>
<svg style="left:887px;top:440px" width="20" height="20" viewBox="0 0 20 20"><rect x="0" y="0" width="8.5" height="8.5" fill="#36566f"/><rect x="0" y="11" width="8.5" height="8.5" fill="#36566f"/><path d="M4.2 8.5 V11" stroke="#36566f" stroke-width="1.2"/><circle cx="4.2" cy="4.2" r="1.9" fill="#3fa777"/><circle cx="4.2" cy="15.2" r="1.9" fill="#0e9ad7"/><path d="M10 1.5 H19 " stroke="#3fa777" stroke-width="1.6"/><path d="M10 4.2 H17 M10 6.8 H17" stroke="#8fc4aa" stroke-width="1.3"/><path d="M10 12.5 H19" stroke="#0e9ad7" stroke-width="1.6"/><path d="M10 15.2 H17 M10 17.8 H17" stroke="#86b9d3" stroke-width="1.3"/></svg>
<div class="sep" style="left:912px;top:439px;height:24px"></div>
<svg style="left:919px;top:441px" width="19" height="18" viewBox="0 0 19 18"><path d="M0 1 H19" stroke="#36566f" stroke-width="1.8"/><path d="M0 5 H8 M11 5 H19 M0 7.6 H8 M11 7.6 H19 M0 10.3 H8 M11 10.3 H19" stroke="#7fbf9f" stroke-width="1.1"/><path d="M0 13.8 H8 M11 13.8 H19 M0 16.6 H8 M11 16.6 H19" stroke="#6fb3d6" stroke-width="1.1"/></svg>
<div class="sep" style="left:944px;top:439px;height:24px"></div>
<svg style="left:951px;top:439px" width="20" height="21" viewBox="0 0 20 21"><text x="0.5" y="9.2" font-family="Liberation Sans,sans-serif" font-weight="700" font-size="11" fill="#3fa777">A</text><text x="0.8" y="19.8" font-family="Liberation Sans,sans-serif" font-weight="700" font-size="11" fill="#dd4444">Z</text><path d="M14 2 V4 M14 6 V8" stroke="#36566f" stroke-width="1.6"/><path d="M14 10 V19 M10.5 15 L14 19 L17.5 15" stroke="#36566f" stroke-width="1.6" fill="none"/></svg>
<div class="sep" style="left:976px;top:439px;height:24px"></div>
<div class="a" style="left:980px;top:439px;width:150px;height:22px;border:1px solid #d0d0d4;background:#f0f0f1"></div>
<div class="t " style="left:984px;top:442px;color:#8a8a8a">Field7</div>
<svg style="left:1119px;top:449px" width="7" height="4" viewBox="0 0 7 4"><path d="M0 0 H7 L3.5 4 Z" fill="#c3c3c3"/></svg>
<div class="a" style="left:1264px;top:466px;width:15px;height:215px;background:#f0f0f0"></div>
<svg style="left:1267px;top:472px" width="7.4" height="6.4" viewBox="0 0 7.4 6.4"><path d="M0.7 5.7 L3.7 2 L6.7 5.7" stroke="#505050" stroke-width="2" fill="none"/></svg>
<svg style="left:1267px;top:669.5px" width="7.4" height="6.4" viewBox="0 0 7.4 6.4"><path d="M0.7 0.7 L3.7 4.4 L6.7 0.7" stroke="#505050" stroke-width="2" fill="none"/></svg>
<div class="a" style="left:1264px;top:510px;width:14px;height:43px;background:#cdcdcd"></div>
<div class="a" style="left:884px;top:466px;width:379px;height:215px;overflow:hidden">
<div class="a" style="left:13px;top:0px;width:185px;height:18px;background:#f5f5f5"></div>
<div class="a" style="left:199px;top:0px;width:179px;height:18px;background:#f5f5f5"></div>
<div class="t" style="left:16px;top:1px;color:#000;letter-spacing:-0.3px">Back Style</div>
<div class="t" style="left:202px;top:1px;color:#000">1-Normal</div>
<div class="a" style="left:13px;top:19px;width:185px;height:18px;background:#f5f5f5"></div>
<div class="a" style="left:199px;top:19px;width:179px;height:18px;background:#f5f5f5"></div>
<div class="t" style="left:16px;top:20px;color:#000;letter-spacing:-0.2px">Back Color</div>
<div class="a" style="left:201px;top:21px;width:19px;height:14px;border:1px solid #000;background:#fff"></div>
<div class="t" style="left:227px;top:20px;color:#000;letter-spacing:-0.65px">16777215</div>
<div class="a" style="left:13px;top:38px;width:185px;height:18px;background:#f5f5f5"></div>
<div class="a" style="left:199px;top:38px;width:179px;height:18px;background:#f5f5f5"></div>
<div class="t" style="left:16px;top:39px;color:#000;letter-spacing:-0.22px">Special Effect</div>
<div class="t" style="left:202px;top:39px;color:#000">2-Sunken</div>
<div class="a" style="left:13px;top:57px;width:185px;height:18px;background:#f5f5f5"></div>
<div class="a" style="left:199px;top:57px;width:179px;height:18px;background:#f5f5f5"></div>
<div class="t" style="left:16px;top:58px;color:#000;letter-spacing:-0.2px">Fore Color</div>
<div class="a" style="left:201px;top:59px;width:19px;height:14px;border:1px solid #000;background:#000"></div>
<div class="t" style="left:227px;top:58px;color:#000;letter-spacing:0px">0</div>
<div class="a" style="left:13px;top:76px;width:185px;height:18px;background:#f5f5f5"></div>
<div class="a" style="left:199px;top:76px;width:179px;height:18px;background:#f5f5f5"></div>
<div class="t" style="left:16px;top:77px;color:#000;letter-spacing:0px">Text Align</div>
<div class="t" style="left:202px;top:77px;color:#000">0-Left</div>
<svg style="left:1px;top:100px" width="9" height="9" viewBox="0 0 9 9"><rect x="0.5" y="0.5" width="8" height="8" fill="#f8f8f8" stroke="#222" stroke-width="1"/><path d="M2 4.5 H7" stroke="#000" stroke-width="1.2"/></svg>
<div class="t" style="left:16px;top:96px;font-weight:700;color:#000">Data</div>
<div class="a" style="left:13px;top:114px;width:0px;height:18px;background:#f5f5f5"></div>
<div class="a" style="left:199px;top:114px;width:179px;height:18px;background:#f5f5f5"></div>
<div class="t" style="left:16px;top:115px;color:#000;letter-spacing:-0.1px">Control Source</div>
<div class="t" style="left:202px;top:115px;color:#000">comment_text</div>
<div class="a" style="left:344px;top:114px;width:17px;height:18px;border:1px solid #d3d6e6;background:#fbfbfb"></div>
<div class="t" style="left:347px;top:115px;color:#000;font-weight:700;letter-spacing:0.5px">...</div>
<svg style="left:365px;top:121px" width="9" height="5" viewBox="0 0 9 5"><path d="M0 0 H9 L4.5 5 Z" fill="#6d6d6d"/></svg>
<div class="a" style="left:13px;top:133px;width:185px;height:18px;background:#f5f5f5"></div>
<div class="a" style="left:199px;top:133px;width:179px;height:18px;background:#f5f5f5"></div>
<div class="t" style="left:16px;top:134px;color:#000;letter-spacing:0px">Data Type</div>
<div class="t" style="left:202px;top:134px;color:#000">0-Text</div>
<div class="a" style="left:13px;top:152px;width:185px;height:18px;background:#f5f5f5"></div>
<div class="a" style="left:199px;top:152px;width:179px;height:18px;background:#f5f5f5"></div>
<div class="t" style="left:16px;top:153px;color:#000;letter-spacing:0px">Not Null</div>
<div class="t" style="left:202px;top:153px;color:#000">0-No</div>
<div class="a" style="left:13px;top:171px;width:185px;height:18px;background:#f5f5f5"></div>
<div class="a" style="left:199px;top:171px;width:179px;height:18px;background:#f5f5f5"></div>
<div class="t" style="left:16px;top:172px;color:#000;letter-spacing:0px">Input Mask</div>
<div class="a" style="left:13px;top:190px;width:185px;height:18px;background:#f5f5f5"></div>
<div class="a" style="left:199px;top:190px;width:179px;height:18px;background:#f5f5f5"></div>
<div class="t" style="left:16px;top:191px;color:#000;letter-spacing:-0.15px">Default Value</div>
<div class="a" style="left:13px;top:209px;width:185px;height:18px;background:#f5f5f5"></div>
<div class="a" style="left:199px;top:209px;width:179px;height:18px;background:#f5f5f5"></div>
<div class="t" style="left:16px;top:210px;color:#000;letter-spacing:0px">Validation Rule</div>
</div>
<div class="a" style="left:883px;top:685px;width:397px;height:57px;background:#f5f5f5;border-top:1px solid #fff"></div>
<div class="t " style="left:888px;top:687px;font-weight:700;color:#000;letter-spacing:-0.22px">Control Source</div>
<div class="a" style="left:1px;top:711px;width:882px;height:31px;background:#f0f0f2"></div>
<div class="t " style="left:13px;top:719px;color:#000;letter-spacing:-0.35px">Record:</div>
<div class="sep" style="left:65px;top:716px;height:24px"></div>
<svg style="left:74px;top:719px" width="17" height="16" viewBox="0 0 17 16"><rect x="0" y="0" width="5" height="15" fill="#8c8c8c"/><path d="M16 0 V15.5 L5.6 7.7 Z" fill="#8c8c8c"/></svg>
<svg style="left:102px;top:719px" width="11" height="16" viewBox="0 0 11 16"><path d="M11 0 V16 L0.6 8 Z" fill="#8c8c8c"/></svg>
<div class="a" style="left:123px;top:718px;width:46px;height:18px;border:1px solid #555;border-top-color:#d9d9d9;background:#e6e7e8"></div>
<div class="t " style="left:158px;top:718px;color:#7a7a7a">1</div>
<svg style="left:179px;top:719px" width="11" height="16" viewBox="0 0 11 16"><path d="M0 0 V16 L10.4 8 Z" fill="#8c8c8c"/></svg>
<svg style="left:202px;top:719px" width="17" height="16" viewBox="0 0 17 16"><path d="M0 0 V15.5 L10.4 7.7 Z" fill="#8c8c8c"/><rect x="11" y="0" width="5" height="15" fill="#8c8c8c"/></svg>
<div class="t " style="left:311px;top:719px;color:#a0a0a0">of&nbsp;&nbsp;1</div>
<div class="a" style="left:423px;top:715px;width:223px;height:24px;border:1px solid #dddfe9;background:#f6f6f6"></div>
<svg style="left:512px;top:720px" width="17" height="13" viewBox="0 0 17 13"><path d="M0.5 7.5 L6.5 12.3 L16.5 0.5" stroke="#ababab" stroke-width="1.3" fill="none"/></svg>
<div class="t " style="left:533px;top:719px;color:#6d6d78;letter-spacing:-0.5px">Save</div>
<div class="sep" style="left:648px;top:716px;height:24px"></div>
<div class="a" style="left:652px;top:715px;width:224px;height:24px;border:1px solid #dddfe9;background:#f6f6f6"></div>
<svg style="left:742px;top:718px" width="18" height="18" viewBox="0 0 18 18"><path d="M9 1.2 V16.6 M1.2 9 H16.8" stroke="#b5b5b5" stroke-width="2.4" stroke-linecap="round"/></svg>
<div class="t " style="left:764px;top:719px;color:#6d6d78">Add</div>
<div class="a" style="left:0px;top:742px;width:1281px;height:21px;background:#0078d4"></div>
<div class="t " style="left:4px;top:745px;color:#fff;letter-spacing:0.12px">Main window</div>
<div class="t " style="left:1103.5px;top:745px;color:#fff;letter-spacing:-0.55px">5.4.8.24</div>
<svg style="left:1268px;top:750px" width="9" height="9" viewBox="0 0 9 9"><rect x="6" y="0" width="1" height="1" fill="#0062b5"/><rect x="7" y="1" width="1" height="1" fill="#8cc6f2"/><rect x="6" y="2" width="1" height="1" fill="#0062b5"/><rect x="7" y="3" width="1" height="1" fill="#8cc6f2"/><rect x="4" y="2" width="1" height="1" fill="#0062b5"/><rect x="5" y="3" width="1" height="1" fill="#8cc6f2"/><rect x="6" y="4" width="1" height="1" fill="#0062b5"/><rect x="7" y="5" width="1" height="1" fill="#8cc6f2"/><rect x="4" y="4" width="1" height="1" fill="#0062b5"/><rect x="5" y="5" width="1" height="1" fill="#8cc6f2"/><rect x="2" y="4" width="1" height="1" fill="#0062b5"/><rect x="3" y="5" width="1" height="1" fill="#8cc6f2"/><rect x="6" y="6" width="1" height="1" fill="#0062b5"/><rect x="7" y="7" width="1" height="1" fill="#8cc6f2"/><rect x="4" y="6" width="1" height="1" fill="#0062b5"/><rect x="5" y="7" width="1" height="1" fill="#8cc6f2"/><rect x="2" y="6" width="1" height="1" fill="#0062b5"/><rect x="3" y="7" width="1" height="1" fill="#8cc6f2"/><rect x="0" y="6" width="1" height="1" fill="#0062b5"/><rect x="1" y="7" width="1" height="1" fill="#8cc6f2"/></svg>
</body></html>
